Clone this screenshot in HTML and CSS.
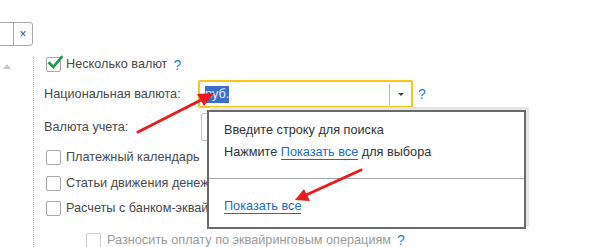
FILE: index.html
```html
<!DOCTYPE html>
<html lang="ru">
<head>
<meta charset="utf-8">
<title>Валюты</title>
<link rel="stylesheet" href="styles.css">
</head>
<body>
<div class="page">
  <div class="sidebar">
    <div class="toolbox">
      <span class="tool-input"></span>
      <span class="tool-btn">×</span>
    </div>
    <span class="scroll-up"></span>
  </div>
  <div class="form">
    <div class="row row-check first">
      <span class="cb checked">
        <svg class="tick" width="16" height="16" viewBox="0 0 16 16"><path d="M2.5 8.2 L6.3 12 L14.5 2.2" fill="none" stroke="#1b9a4a" stroke-width="2.6" stroke-linecap="square"/></svg>
      </span>
      <span class="label">Несколько валют</span>
      <span class="help">?</span>
    </div>
    <div class="row row-field">
      <span class="label field-label">Национальная валюта:</span>
      <div class="input active">
        <span class="value"><span class="sel">руб.</span></span>
        <span class="dd"><span class="dd-arrow"></span></span>
      </div>
      <span class="help help-field">?</span>
    </div>
    <div class="row row-field2">
      <span class="label field-label">Валюта учета:</span>
      <div class="input plain"></div>
    </div>
    <div class="row row-check">
      <span class="cb"></span>
      <span class="label">Платежный календарь</span>
    </div>
    <div class="row row-check">
      <span class="cb"></span>
      <span class="label">Статьи движения денежных средств</span>
    </div>
    <div class="row row-check">
      <span class="cb"></span>
      <span class="label">Расчеты с банком-эквайером</span>
    </div>
    <div class="row row-check sub disabled">
      <span class="cb"></span>
      <span class="label">Разносить оплату по эквайринговым операциям</span>
      <span class="help">?</span>
    </div>
  </div>
</div>

<div class="popup">
  <div class="popup-body">
    <p class="popup-line">Введите строку для поиска</p>
    <p class="popup-line">Нажмите <a class="link" href="#">Показать все</a> для выбора</p>
  </div>
  <div class="popup-foot">
    <a class="link" href="#">Показать все</a>
  </div>
</div>

<svg class="arrows" width="595" height="247" viewBox="0 0 595 247">
  <g stroke="#e81c1c" stroke-width="3" stroke-linecap="round" fill="none">
    <line x1="138" y1="132" x2="203" y2="99"/>
    <line x1="361" y1="170" x2="306" y2="195"/>
  </g>
  <g fill="#e81c1c">
    <polygon points="214,93 197,94 204,106"/>
    <polygon points="295,200 304,189 310,201"/>
  </g>
</svg>
</body>
</html>
```

FILE: styles.css
```css
* { box-sizing: border-box; }
html, body { margin: 0; padding: 0; background: #fff; }
body {
  width: 595px;
  height: 247px;
  overflow: hidden;
  position: relative;
  font-family: "Liberation Sans", Arial, sans-serif;
  font-size: 12.7px;
  color: #4a4a4a;
}
.page {
  display: flex;
  height: 247px;
}
.sidebar {
  width: 33px;
  padding-top: 22px;
  display: flex;
  flex-direction: column;
}
.toolbox {
  display: flex;
  height: 24px;
  width: 34px;
  margin-left: -1px;
  border: 1px solid #a9a9a9;
  border-radius: 0 3px 3px 0;
}
.tool-input {
  width: 14px;
  border-right: 1px solid #a9a9a9;
}
.tool-btn {
  flex: 1;
  text-align: center;
  line-height: 22px;
  font-size: 12px;
  color: #555;
}
.scroll-up {
  margin: 18px 0 0 3px;
  width: 0;
  height: 0;
  border-left: 4px solid transparent;
  border-right: 4px solid transparent;
  border-bottom: 5px solid #c8c8c8;
}
.form {
  margin-top: 57px;
  border-left: 1px dotted #bdbdbd;
  padding-left: 10px;
  flex: 1;
  display: flex;
  flex-direction: column;
}
.row {
  display: flex;
  align-items: center;
  white-space: nowrap;
}
.row-check { height: 25.5px; flex: none; }
.row-check.first { height: 15px; }
.cb {
  position: relative;
  flex: none;
  width: 15px;
  height: 15px;
  margin-left: 2px;
  margin-right: 5px;
  border: 1px solid #a8a8a8;
  border-radius: 2px;
  background: #fff;
}
.tick {
  position: absolute;
  left: 0;
  top: -3px;
}
.label { line-height: 15px; }
.help {
  color: #1f7fd0;
  margin-left: 6px;
  font-size: 14px;
}
.row-field {
  margin-top: 8px;
  height: 28px;
  flex: none;
}
.field-label { width: 154px; }
.input {
  height: 28px;
  border-radius: 2px;
}
.input.active {
  width: 215px;
  border: 2px solid #f7c51b;
  display: flex;
  align-items: center;
  padding-left: 5px;
}
.value { flex: 1; }
.sel {
  background: #3c6fca;
  color: #e8eef9;
  padding: 1px 0 2px;
}
.dd {
  width: 21px;
  height: 21px;
  border-left: 1px solid #b5b5b5;
  display: flex;
  align-items: center;
  justify-content: center;
  margin-right: 1px;
}
.dd-arrow {
  width: 0;
  height: 0;
  border-left: 3px solid transparent;
  border-right: 3px solid transparent;
  border-top: 3px solid #444;
  margin-left: 1px;
}
.help-field { margin-left: 5px; }
.row-field2 {
  margin-top: 5px;
  height: 28px;
  margin-bottom: 4px;
  flex: none;
}
.input.plain {
  margin-left: 3px;
  width: 200px;
  border: 1px solid #c4c4c4;
}
.sub { margin-top: 6px; }
.sub .cb { margin-left: 42px; margin-right: 6px; }
.disabled .cb { border-color: #cdcdcd; }
.disabled .label { color: #9a9a9a; }
.disabled .help { margin-left: 6px; }

.popup {
  position: absolute;
  left: 207px;
  top: 110px;
  width: 319px;
  height: 119px;
  background: #fff;
  border: 2px solid #6a6a6a;
  box-shadow: 3px -3px 0 #e6e6e6;
  display: flex;
  flex-direction: column;
  color: #333;
}
.popup-body {
  height: 67px;
  padding: 11px 0 0 15px;
  border-bottom: 1px solid #a5a5a5;
}
.popup-line {
  margin: 0 0 7px;
  line-height: 15px;
}
.popup-foot {
  padding: 20px 0 0 15px;
}
.link {
  color: #1a6fbd;
  text-decoration: none;
  border-bottom: 1px solid #1a6fbd;
}
.arrows {
  position: absolute;
  left: 0;
  top: 0;
  pointer-events: none;
}
```
